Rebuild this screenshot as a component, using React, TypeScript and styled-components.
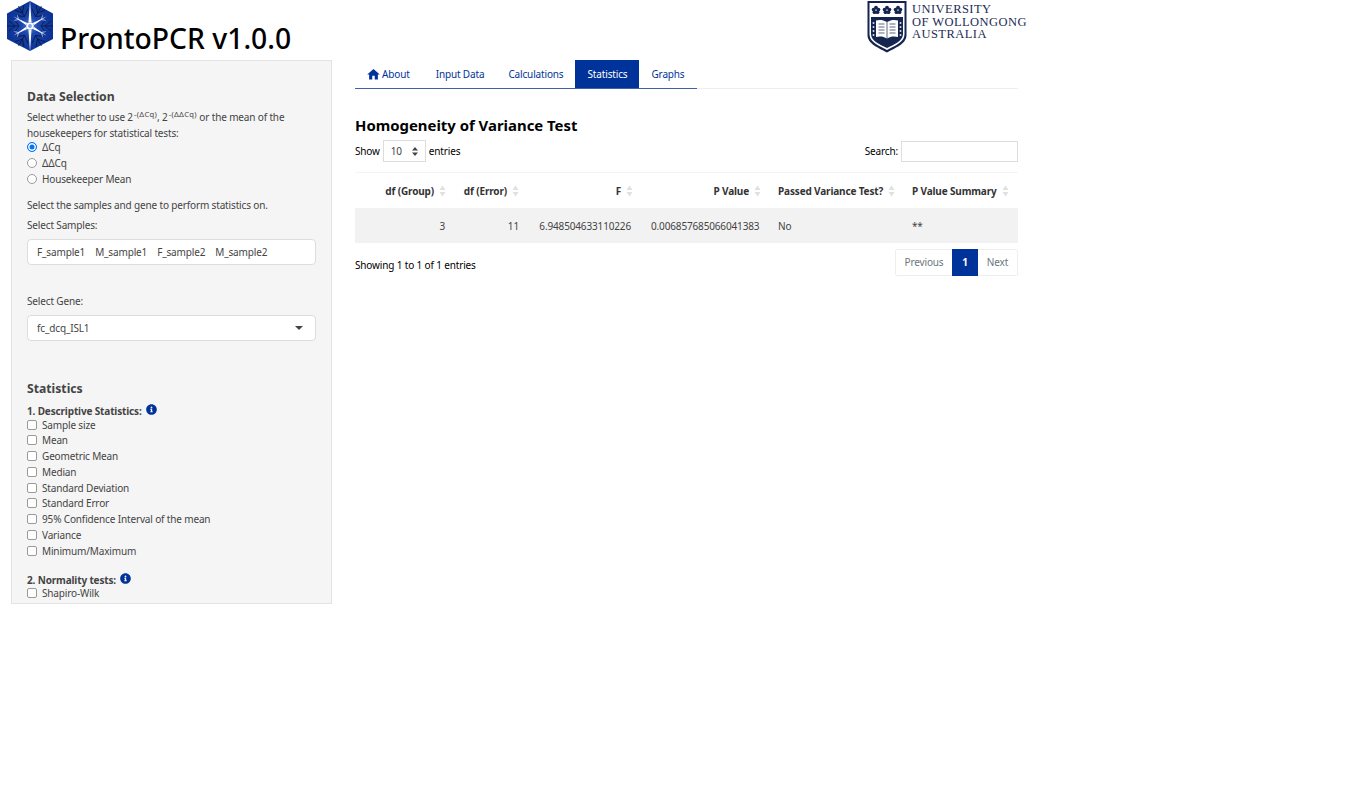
import styled, { createGlobalStyle } from 'styled-components';
import { FaInfoCircle } from 'react-icons/fa';
import { MdHome } from 'react-icons/md';

const blue = '#003399';

const GlobalStyle = createGlobalStyle`
html, body {
  background: #ffffff;
  margin: 0;
  padding: 0;
}
body {
  color: #000000;
  font-family: "Noto Sans", "Open Sans", sans-serif;
  font-size: 10px;
  letter-spacing: -0.15px;
  line-height: 16px;
}
`;

const Page = styled.div`
height: 805px;
overflow: hidden;
width: 1372px;
`;

const Header = styled.header`
align-items: flex-start;
display: flex;
height: 60px;
justify-content: space-between;
padding-left: 6px;
width: 1021px;
`;

const Brand = styled.div`
align-items: flex-start;
display: flex;
gap: 6px;
`;

const BrandTitle = styled.h1`
font-size: 28.3px;
font-weight: 500;
letter-spacing: 0;
line-height: 40px;
margin: 18px 0 0;
white-space: nowrap;
`;

const Uni = styled.div`
align-items: flex-start;
display: flex;
gap: 5px;
`;

const UniText = styled.div`
color: #1c2b55;
font-family: "Liberation Serif", serif;
font-size: 12.5px;
letter-spacing: 0.45px;
line-height: 12.5px;
padding-top: 3px;
white-space: nowrap;
`;

const Columns = styled.div`
align-items: flex-start;
display: flex;
gap: 23px;
padding-left: 11px;
`;

const Sidebar = styled.aside`
background: #f5f5f5;
border: 1px solid #e3e3e3;
box-sizing: border-box;
color: #444444;
height: 544px;
overflow: hidden;
padding: 27px 15px 0;
width: 321px;
`;

const SectionTitle = styled.h4<{ $top?: number; $bottom: number }>`
font-size: 12.2px;
font-weight: 700;
letter-spacing: 0;
line-height: 18px;
margin: ${(p) => p.$top ?? 0}px 0 ${(p) => p.$bottom}px;
`;

const Para = styled.p<{ $top?: number; $bottom?: number }>`
margin: ${(p) => p.$top ?? 0}px 0 ${(p) => p.$bottom ?? 0}px;
`;

const Sup = styled.sup`
font-size: 7.6px;
letter-spacing: 0.3px;
line-height: 0;
margin-left: 1px;
`;

const Option = styled.label`
align-items: center;
display: flex;
gap: 5px;
height: 15.75px;
`;

const RadioInput = styled.input`
appearance: none;
background: #ffffff;
border: 1px solid #9a9a9a;
border-radius: 50%;
box-sizing: border-box;
flex: none;
height: 10px;
margin: 0;
width: 10px;

&:checked {
  border-color: #0075ff;
  box-shadow: inset 0 0 0 1.5px #ffffff;
  background: #0075ff;
}
`;

const CheckInput = styled.input`
appearance: none;
background: #ffffff;
border: 1px solid #9a9a9a;
border-radius: 2px;
box-sizing: border-box;
flex: none;
height: 10px;
margin: 0;
width: 10px;
`;

const FieldLabel = styled.div<{ $top?: number }>`
margin-top: ${(p) => p.$top ?? 0}px;
`;

const FieldBox = styled.div<{ $top?: number; $height: number }>`
align-items: center;
background: #ffffff;
border: 1px solid #dddddd;
border-radius: 4px;
box-sizing: border-box;
display: flex;
height: ${(p) => p.$height}px;
justify-content: space-between;
margin-top: ${(p) => p.$top ?? 0}px;
padding: 0 12px 0 9px;
`;

const Chips = styled.div`
display: flex;
gap: 10px;
`;

const Caret = styled.span`
border-left: 4px solid transparent;
border-right: 4px solid transparent;
border-top: 4px solid #444444;
margin-top: -1px;
`;

const GroupLabel = styled.div<{ $top?: number }>`
align-items: center;
display: flex;
font-weight: 700;
gap: 4px;
height: 11px;
margin-top: ${(p) => p.$top ?? 0}px;
`;

const InfoIcon = styled(FaInfoCircle)`
color: ${blue};
font-size: 11px;
margin-top: -3px;
`;

const Main = styled.main`
width: 663px;
`;

const TabBar = styled.nav`
border-bottom: 1px solid #eeeeee;
display: flex;
`;

const TabList = styled.div`
border-bottom: 1px solid #3f62ab;
display: flex;
margin-bottom: -1px;
`;

const Tab = styled.a<{ $active?: boolean; $end?: number }>`
align-items: center;
background: ${(p) => (p.$active ? blue : 'transparent')};
color: ${(p) => (p.$active ? '#ffffff' : blue)};
display: flex;
gap: 1px;
height: 28px;
padding: 0 ${(p) => p.$end ?? 12}px 0 12px;
`;

const HomeIcon = styled(MdHome)`
margin-left: -1px;
`;

const Heading = styled.h3`
font-size: 14.9px;
font-weight: 700;
letter-spacing: 0;
line-height: 20px;
margin: 26px 0 0;
`;

const Controls = styled.div`
align-items: center;
display: flex;
justify-content: space-between;
margin-top: 5px;
`;

const Inline = styled.div`
align-items: center;
display: flex;
gap: 3px;
`;

const LengthSelect = styled.div`
align-items: center;
border: 1px solid #dddddd;
box-sizing: border-box;
color: #444444;
display: flex;
height: 22px;
justify-content: space-between;
padding: 0 7px;
width: 43px;
`;

const SearchBox = styled.input`
border: 1px solid #dddddd;
box-sizing: border-box;
height: 21px;
margin: 0;
width: 117px;
`;

const Table = styled.table`
border-collapse: collapse;
margin-top: 10px;
table-layout: fixed;
width: 663px;
`;

const Col = styled.col<{ $width: number }>`
width: ${(p) => p.$width}px;
`;

const HeadRow = styled.tr`
border-top: 1px solid #f4f4f4;
height: 35px;
`;

const Th = styled.th<{ $left?: boolean; $end: number }>`
color: #333333;
font-weight: 700;
padding: 1px ${(p) => p.$end}px 0 ${(p) => (p.$left ? 10 : 0)}px;
text-align: ${(p) => (p.$left ? 'left' : 'right')};
white-space: nowrap;
`;

const Td = styled.td<{ $left?: boolean }>`
background: #f2f2f2;
color: #444444;
height: 34px;
padding: 1px 10px 0;
text-align: ${(p) => (p.$left ? 'left' : 'right')};
white-space: nowrap;
`;

const SortSvg = styled.svg`
margin-left: 5px;
vertical-align: -2px;
`;

const Footer = styled.div`
display: flex;
justify-content: space-between;
margin-top: 6px;
`;

const Info = styled.div`
padding-top: 8px;
`;

const Pager = styled.div`
border: 1px solid #eeeeee;
border-radius: 2px;
display: flex;
height: 25px;
`;

const PageLink = styled.span<{ $active?: boolean; $width: number }>`
align-items: center;
background: ${(p) => (p.$active ? blue : '#ffffff')};
color: ${(p) => (p.$active ? '#ffffff' : '#6c757d')};
display: flex;
font-weight: ${(p) => (p.$active ? 700 : 400)};
justify-content: center;
margin: ${(p) => (p.$active ? '-1px 0' : '0')};
width: ${(p) => p.$width}px;
`;

function SortIcon() {
  return (
    <SortSvg width="7" height="12" viewBox="0 0 7 12">
      <path d="M3.5 0.5 6.5 5H0.5Z M0.5 7H6.5L3.5 11.5Z" fill="#e0e0e0" />
    </SortSvg>
  );
}

function NeuronLogo() {
  return (
    <svg width="48" height="52" viewBox="0 0 48 52">
      <defs>
        <radialGradient id="glow" cx="50%" cy="50%" r="50%">
          <stop offset="0%" stopColor="#5a82dc" />
          <stop offset="35%" stopColor="#1a46ad" />
          <stop offset="100%" stopColor="#0c3296" />
        </radialGradient>
      </defs>
      <path d="M24 1 47 13.5V39L24 51 1 39V13.5Z" fill="url(#glow)" />
      {[30, 90, 150, 210, 270, 330].map((a) => (
        <g key={a} transform={`rotate(${a} 24 26)`} stroke="#07112f" strokeWidth="0.7" fill="none">
          <path d="M24 15V3M24 11 19 5M24 11 29 5M24 15 17 10M24 15 31 10" />
        </g>
      ))}
      <path d="M24 0 25.5 22H22.5Z M24 52 22.5 30H25.5Z" fill="#ffffff" />
      {[60, 120, 240, 300].map((a) => (
        <g key={a} transform={`rotate(${a} 24 26)`}>
          <path d="M24 7 25.2 22H22.8Z" fill="#ffffff" />
          <path d="M24 13 21 9.5M24 13 27 9.5" stroke="#dfe8ff" strokeWidth="0.6" />
        </g>
      ))}
      <circle cx="24" cy="26" r="3.8" fill="#ffffff" />
      <circle cx="24" cy="26" r="1.9" fill="#7f9fe6" />
    </svg>
  );
}

function Flower({ x }: { x: number }) {
  return (
    <g transform={`translate(${x} 10)`} fill="#14254f">
      <circle cx="0" cy="-2.4" r="1.9" />
      <circle cx="-2.4" cy="-0.4" r="1.9" />
      <circle cx="2.4" cy="-0.4" r="1.9" />
      <circle cx="-1.5" cy="2.2" r="1.9" />
      <circle cx="1.5" cy="2.2" r="1.9" />
    </g>
  );
}

function Crest() {
  return (
    <svg width="40" height="53" viewBox="0 0 40 53">
      <path d="M0.5 1H39.5V35C39.5 44 28 48 20 52.5 12 48 0.5 44 0.5 35Z" fill="#14254f" />
      <path d="M2.5 3H37.5V34.5C37.5 42.5 27 46 20 50 13 46 2.5 42.5 2.5 34.5Z" fill="#ffffff" />
      <path d="M4 17H36V34C36 41.5 26.5 44.5 20 48 13.5 44.5 4 41.5 4 34Z" fill="#14254f" />
      <Flower x={9} />
      <Flower x={20} />
      <Flower x={31} />
      <path d="M20 22C16 19.5 12 19.5 9 20.5V37C12 36 16.5 36 20 38.5 23.5 36 28 36 31 37V20.5C28 19.5 24 19.5 20 22Z" fill="#ffffff" />
      <path d="M20 22V38.5M11.5 24H17.5M11.5 27H17.5M11.5 30H17.5M11.5 33H17.5M22.5 24H28.5M22.5 27H28.5M22.5 30H28.5M22.5 33H28.5" stroke="#14254f" strokeWidth="0.7" />
      <path d="M6.5 22V36M33.5 22V36" stroke="#c8cfdd" strokeWidth="1.6" strokeDasharray="2 2" />
    </svg>
  );
}

const descriptive = [
  'Sample size',
  'Mean',
  'Geometric Mean',
  'Median',
  'Standard Deviation',
  'Standard Error',
  '95% Confidence Interval of the mean',
  'Variance',
  'Minimum/Maximum',
];

const columns = [
  { title: 'df (Group)', width: 100, end: 9, value: '3' },
  { title: 'df (Error)', width: 74, end: 10, value: '11' },
  { title: 'F', width: 112, end: 8, value: '6.948504633110226' },
  { title: 'P Value', width: 127, end: 7, value: '0.006857685066041383' },
  { title: 'Passed Variance Test?', width: 134, end: 7, value: 'No', left: true },
  { title: 'P Value Summary', width: 116, end: 7, value: '**', left: true },
];

function App() {
  return (
    <Page>
      <GlobalStyle />
      <Header>
        <Brand>
          <NeuronLogo />
          <BrandTitle>ProntoPCR v1.0.0</BrandTitle>
        </Brand>
        <Uni>
          <Crest />
          <UniText>
            UNIVERSITY
            <br />
            OF WOLLONGONG
            <br />
            AUSTRALIA
          </UniText>
        </Uni>
      </Header>

      <Columns>
        <Sidebar>
          <SectionTitle $bottom={3}>Data Selection</SectionTitle>
          <Para $bottom={-1.7}>
            Select whether to use 2<Sup>-(ΔCq)</Sup>, 2<Sup>-(ΔΔCq)</Sup> or the mean of the
            <br />
            housekeepers for statistical tests:
          </Para>
          <Option><RadioInput type="radio" name="mode" defaultChecked />ΔCq</Option>
          <Option><RadioInput type="radio" name="mode" />ΔΔCq</Option>
          <Option><RadioInput type="radio" name="mode" />Housekeeper Mean</Option>

          <Para $top={10.7}>Select the samples and gene to perform statistics on.</Para>
          <FieldLabel $top={4}>Select Samples:</FieldLabel>
          <FieldBox $top={6} $height={26}>
            <Chips>
              <span>F_sample1</span>
              <span>M_sample1</span>
              <span>F_sample2</span>
              <span>M_sample2</span>
            </Chips>
          </FieldBox>

          <FieldLabel $top={28}>Select Gene:</FieldLabel>
          <FieldBox $top={6} $height={26}>
            <span>fc_dcq_ISL1</span>
            <Caret />
          </FieldBox>

          <SectionTitle $top={39} $bottom={7.5}>Statistics</SectionTitle>
          <GroupLabel>1. Descriptive Statistics: <InfoIcon /></GroupLabel>
          {descriptive.map((item) => (
            <Option key={item}><CheckInput type="checkbox" />{item}</Option>
          ))}
          <GroupLabel $top={15.5}>2. Normality tests: <InfoIcon /></GroupLabel>
          <Option><CheckInput type="checkbox" />Shapiro-Wilk</Option>
        </Sidebar>

        <Main>
          <TabBar>
            <TabList>
              <Tab $end={14}><HomeIcon size={15} />About</Tab>
              <Tab>Input Data</Tab>
              <Tab>Calculations</Tab>
              <Tab $active>Statistics</Tab>
              <Tab>Graphs</Tab>
            </TabList>
          </TabBar>

          <Heading>Homogeneity of Variance Test</Heading>
          <Controls>
            <Inline>
              Show
              <LengthSelect>
                10
                <svg width="6" height="9" viewBox="0 0 6 9">
                  <path d="M3 0 6 3.5H0Z M0 5.5H6L3 9Z" fill="#444444" />
                </svg>
              </LengthSelect>
              entries
            </Inline>
            <Inline>
              Search:
              <SearchBox type="text" />
            </Inline>
          </Controls>

          <Table>
            <colgroup>
              {columns.map((c) => <Col key={c.title} $width={c.width} />)}
            </colgroup>
            <thead>
              <HeadRow>
                {columns.map((c) => (
                  <Th key={c.title} $left={c.left} $end={c.end}>{c.title}<SortIcon /></Th>
                ))}
              </HeadRow>
            </thead>
            <tbody>
              <tr>
                {columns.map((c) => (
                  <Td key={c.title} $left={c.left}>{c.value}</Td>
                ))}
              </tr>
            </tbody>
          </Table>

          <Footer>
            <Info>Showing 1 to 1 of 1 entries</Info>
            <Pager>
              <PageLink $width={56}>Previous</PageLink>
              <PageLink $active $width={26}>1</PageLink>
              <PageLink $width={39}>Next</PageLink>
            </Pager>
          </Footer>
        </Main>
      </Columns>
    </Page>
  );
}

export default App;
